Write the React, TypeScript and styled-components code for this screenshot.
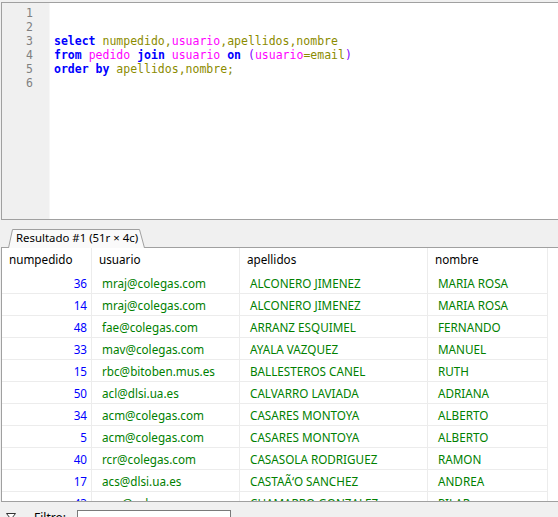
import React, { FC } from 'react';
import styled, { createGlobalStyle } from 'styled-components';

const GlobalStyle = createGlobalStyle`
  html, body {
    margin: 0;
    padding: 0;
    background: #f0f0f0;
    overflow: hidden;
  }
`;

const colours = {
  border: '#a0a0a0',
  panel: '#f0f0f0',
  gridLine: '#ececec',
  keyword: '#0000ff',
  column: '#8b8b00',
  table: '#ff00ff',
  paren: '#8000ff',
  number: '#0000ff',
  text: '#008000',
};

const Window = styled.div`
  width: 558px;
  height: 517px;
  display: flex;
  flex-direction: column;
  background: ${colours.panel};
  overflow: hidden;

  & > * {
    flex-shrink: 0;
  }
`;

/* ---------- SQL editor ---------- */

const Editor = styled.div`
  margin: 2px 0 0 1px;
  height: 216px;
  display: flex;
  border: 1px solid ${colours.border};
  border-right: none;
  background: #fff;
  font-family: "DejaVu Sans Mono", "Liberation Mono", monospace;
  font-size: 11.5px;
  line-height: 14px;
`;

const Gutter = styled.div`
  width: 48px;
  padding: 3px 16px 0 0;
  box-sizing: border-box;
  background: ${colours.panel};
  border-right: 1px solid #f7f7f7;
  text-align: right;
  color: #808080;
`;

const Code = styled.div`
  padding: 3px 0 0 4px;
  white-space: pre;
  color: #000;
`;

const Kw = styled.span`
  color: ${colours.keyword};
  font-weight: bold;
`;

const Col = styled.span`
  color: ${colours.column};
`;

const Tbl = styled.span`
  color: ${colours.table};
`;

const Paren = styled.span`
  color: ${colours.paren};
`;

/* ---------- result tabs ---------- */

const TabBar = styled.div`
  height: 27px;
  display: flex;
  align-items: flex-end;
  padding-left: 8px;
  font-family: "Noto Sans", "Open Sans", sans-serif;
  font-size: 11.4px;
`;

const Tab = styled.div`
  position: relative;
  height: 18px;
  width: 137px;
  padding-left: 8px;
  box-sizing: border-box;
  line-height: 18px;
  color: #000;
  white-space: nowrap;
`;

const TabOutline = styled.svg`
  position: absolute;
  left: 0;
  top: 0;
  z-index: 0;
`;

const TabLabel = styled.span`
  position: relative;
  z-index: 1;
`;

/* ---------- data grid ---------- */

const Grid = styled.div`
  margin-left: 1px;
  height: 253px;
  border: 1px solid ${colours.border};
  border-right: none;
  background: #fff;
  overflow: hidden;
  font-family: "Noto Sans", "Open Sans", sans-serif;
  font-size: 11.7px;
`;

const Row = styled.div<{ $header?: boolean }>`
  display: grid;
  grid-template-columns: 90px 148px 188px 120px;
  height: ${p => (p.$header ? 24 : 22)}px;
`;

const HeaderCell = styled.div`
  padding-left: 7px;
  border-right: 1px solid ${colours.gridLine};
  line-height: 23px;
  color: #000;
  white-space: nowrap;
  overflow: hidden;
`;

const Cell = styled.div<{ $numeric?: boolean }>`
  height: 22px;
  box-sizing: border-box;
  padding: ${p => (p.$numeric ? '0 4px 0 0' : '0 0 0 10px')};
  text-align: ${p => (p.$numeric ? 'right' : 'left')};
  color: ${p => (p.$numeric ? colours.number : colours.text)};
  border-right: 1px solid ${colours.gridLine};
  border-bottom: 1px solid ${colours.gridLine};
  line-height: 22px;
  white-space: nowrap;
  overflow: hidden;
`;

/* ---------- filter bar ---------- */

const FilterBar = styled.div`
  display: flex;
  align-items: flex-start;
  padding: 8px 0 0 6px;
  font-family: "Noto Sans", "Open Sans", sans-serif;
  font-size: 12px;
`;

const FilterIcon = styled.svg`
  margin-top: 2px;
`;

const FilterLabel = styled.span`
  margin-left: 18px;
  width: 43px;
  line-height: 16px;
`;

const FilterInput = styled.div`
  width: 154px;
  height: 20px;
  border: 1px solid #7a7a7a;
  background: #fff;
  box-sizing: border-box;
`;

const rows: [number, string, string, string][] = [
  [36, 'mraj@colegas.com', 'ALCONERO JIMENEZ', 'MARIA ROSA'],
  [14, 'mraj@colegas.com', 'ALCONERO JIMENEZ', 'MARIA ROSA'],
  [48, 'fae@colegas.com', 'ARRANZ ESQUIMEL', 'FERNANDO'],
  [33, 'mav@colegas.com', 'AYALA VAZQUEZ', 'MANUEL'],
  [15, 'rbc@bitoben.mus.es', 'BALLESTEROS CANEL', 'RUTH'],
  [50, 'acl@dlsi.ua.es', 'CALVARRO LAVIADA', 'ADRIANA'],
  [34, 'acm@colegas.com', 'CASARES MONTOYA', 'ALBERTO'],
  [5, 'acm@colegas.com', 'CASARES MONTOYA', 'ALBERTO'],
  [40, 'rcr@colegas.com', 'CASASOLA RODRIGUEZ', 'RAMON'],
  [17, 'acs@dlsi.ua.es', 'CASTAÃ‘O SANCHEZ', 'ANDREA'],
  [43, 'pcg@colegas.com', 'CHAMARRO GONZALEZ', 'PILAR'],
  [21, 'jcl@colegas.com', 'CORTES LOPEZ', 'JUAN'],
];

const App: FC = () => {
  return (
    <Window>
      <GlobalStyle />

      <Editor>
        <Gutter>
          {[1, 2, 3, 4, 5, 6].map(n => (
            <div key={n}>{n}</div>
          ))}
        </Gutter>
        <Code>
          <div>{' '}</div>
          <div>{' '}</div>
          <div>
            <Kw>select</Kw> <Col>numpedido,</Col><Tbl>usuario</Tbl><Col>,apellidos,nombre</Col>
          </div>
          <div>
            <Kw>from</Kw> <Tbl>pedido</Tbl> <Kw>join</Kw> <Tbl>usuario</Tbl> <Kw>on</Kw>{' '}
            <Paren>(</Paren><Tbl>usuario</Tbl><Col>=email</Col><Paren>)</Paren>
          </div>
          <div>
            <Kw>order by</Kw> <Col>apellidos,nombre;</Col>
          </div>
          <div>{' '}</div>
        </Code>
      </Editor>

      <TabBar>
        <Tab>
          <TabOutline width="137" height="19" viewBox="0 0 137 19">
            <path d="M0.5 19 L4.5 0.5 L131.5 0.5 L136.5 19" fill="#fafafa" stroke={colours.border} />
          </TabOutline>
          <TabLabel>Resultado #1 (51r × 4c)</TabLabel>
        </Tab>
      </TabBar>

      <Grid>
        <Row $header>
          <HeaderCell>numpedido</HeaderCell>
          <HeaderCell>usuario</HeaderCell>
          <HeaderCell>apellidos</HeaderCell>
          <HeaderCell>nombre</HeaderCell>
        </Row>
        {rows.map(([num, user, last, first], i) => (
          <Row key={i}>
            <Cell $numeric>{num}</Cell>
            <Cell>{user}</Cell>
            <Cell>{last}</Cell>
            <Cell>{first}</Cell>
          </Row>
        ))}
      </Grid>

      <FilterBar>
        <FilterIcon width="10" height="12" viewBox="0 0 10 12">
          <path d="M0.5 1.5 L9.5 1.5 L6 6 L6 11 L4 10 L4 6 Z" fill="#fff" stroke="#333" />
        </FilterIcon>
        <FilterLabel>Filtro:</FilterLabel>
        <FilterInput />
      </FilterBar>
    </Window>
  );
};

export default App;
